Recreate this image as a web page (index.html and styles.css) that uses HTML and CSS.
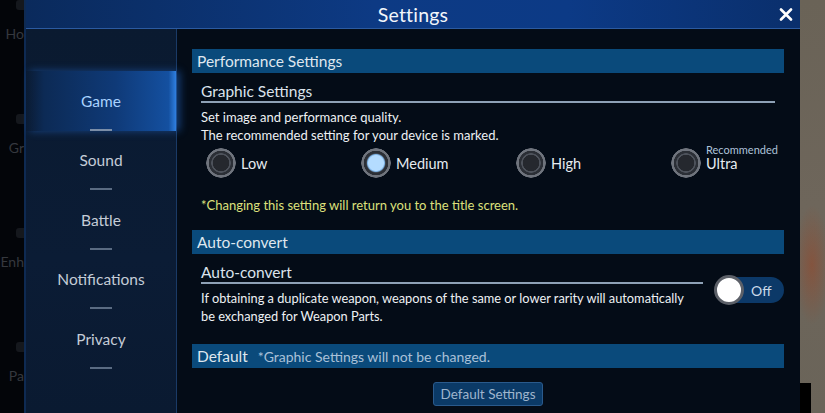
FILE: index.html
```html
<!DOCTYPE html>
<html lang="en">
<head>
    <meta charset="UTF-8">
    <meta name="viewport" content="width=device-width, initial-scale=1.0">
    <title>Settings</title>
    <link rel="stylesheet" href="styles.css">
</head>
<body>
    <div class="screen">
        <div class="bgLeft">
            <div class="bgItem"><span class="bgIcon"></span><span class="bgText">Ho</span></div>
            <div class="bgItem"><span class="bgIcon"></span><span class="bgText">Gr</span></div>
            <div class="bgItem"><span class="bgIcon"></span><span class="bgText">Enh</span></div>
            <div class="bgItem"><span class="bgIcon"></span><span class="bgText">Pa</span></div>
        </div>

        <div class="dialog">
            <div class="dlgHead">
                <span></span>
                <h1 class="dlgTitle">Settings</h1>
                <button class="close" aria-label="Close">
                    <svg width="14" height="13" viewBox="0 0 14 13">
                        <path d="M2 1.5 L12 11.5 M12 1.5 L2 11.5" stroke="#fff" stroke-width="2.6" stroke-linecap="round"/>
                    </svg>
                </button>
            </div>

            <div class="dlgBody">
                <nav class="side">
                    <div class="sideItem active">Game</div>
                    <div class="sideItem">Sound</div>
                    <div class="sideItem">Battle</div>
                    <div class="sideItem">Notifications</div>
                    <div class="sideItem">Privacy</div>
                </nav>

                <div class="content">
                    <div class="bar">Performance Settings</div>
                    <div class="group">
                        <div class="subTitle">Graphic Settings</div>
                        <p class="desc">Set image and performance quality.<br>The recommended setting for your device is marked.</p>
                        <div class="radios">
                            <div class="radio"><span class="dot"></span><span class="radioLabel">Low</span></div>
                            <div class="radio"><span class="dot on"></span><span class="radioLabel">Medium</span></div>
                            <div class="radio"><span class="dot"></span><span class="radioLabel">High</span></div>
                            <div class="radio"><span class="dot"></span><span class="radioLabel stack"><small>Recommended</small><span>Ultra</span></span></div>
                        </div>
                        <p class="note">*Changing this setting will return you to the title screen.</p>
                    </div>

                    <div class="bar">Auto-convert</div>
                    <div class="group row">
                        <div class="rowText">
                            <div class="subTitle">Auto-convert</div>
                            <p class="desc small">If obtaining a duplicate weapon, weapons of the same or lower rarity will automatically be exchanged for Weapon Parts.</p>
                        </div>
                        <div class="toggle"><span class="knob"></span><span class="toggleText">Off</span></div>
                    </div>

                    <div class="bar">Default <span class="barNote">*Graphic Settings will not be changed.</span></div>
                    <div class="btnRow">
                        <button class="btn">Default Settings</button>
                    </div>
                </div>
            </div>
        </div>

        <div class="bgRight">
            <div class="bgBlock"></div>
        </div>
    </div>
</body>
</html>
```

FILE: styles.css
```css
*{
    box-sizing: border-box;
}
body{
    margin: 0;
    background: #030509;
    font-family: Lato, "Open Sans", sans-serif;
    color: #e6eaef;
}
.screen{
    width: 825px;
    height: 413px;
    display: flex;
    overflow: hidden;
}

/* game behind the dialog */
.bgLeft{
    width: 24px;
    flex-shrink: 0;
    overflow: hidden;
    background: #030509;
    display: flex;
    flex-direction: column;
}
.bgItem{
    height: 114px;
    flex-shrink: 0;
    display: flex;
    flex-direction: column;
    align-items: flex-end;
}
.bgIcon{
    width: 8px;
    height: 10px;
    margin-bottom: 15px;
    background: #15181d;
    border-radius: 3px 0 0 3px;
}
.bgText{
    font-size: 14px;
    line-height: 18px;
    color: #35383e;
    white-space: nowrap;
}
.bgRight{
    width: 25px;
    flex-shrink: 0;
    background:
        radial-gradient(ellipse 18px 60px at 12px 265px, rgba(150,70,40,0.55), transparent),
        linear-gradient(180deg, #6a6357, #6e665b 50%, #6a6459);
    display: flex;
    flex-direction: column;
    justify-content: flex-end;
}
.bgBlock{
    width: 11px;
    height: 30px;
    background: #000;
}

/* dialog */
.dialog{
    width: 776px;
    flex-shrink: 0;
    display: flex;
    flex-direction: column;
    border-left: 2px solid #0e2a52;
}
.dlgHead{
    height: 29px;
    display: grid;
    grid-template-columns: 1fr auto 1fr;
    align-items: center;
    background: linear-gradient(90deg, #0a2a5c, #0d3a84 45%, #0c3a86 70%, #0a2f6c);
    border-bottom: 1px solid #2b5aa0;
}
.dlgTitle{
    margin: 0;
    font-size: 19.5px;
    font-weight: 400;
    color: #f2f6fb;
    letter-spacing: 0.2px;
}
.close{
    justify-self: end;
    margin-right: 7px;
    background: none;
    border: none;
    padding: 0;
    display: flex;
    cursor: pointer;
}
.dlgBody{
    flex: 1;
    display: flex;
    min-height: 0;
}

/* left menu */
.side{
    width: 151px;
    flex-shrink: 0;
    background: linear-gradient(180deg, #0a1a30, #0b1c35 60%, #0a1a31);
    border-right: 1px solid #1a3a66;
    padding-top: 42px;
    display: flex;
    flex-direction: column;
}
.sideItem{
    height: 59.5px;
    display: flex;
    align-items: center;
    justify-content: center;
    font-size: 15.5px;
    color: #c4ccd7;
    position: relative;
}
.sideItem::after{
    content: "";
    position: absolute;
    bottom: 0;
    left: 64px;
    width: 22px;
    height: 2px;
    background: #5a6b82;
}
.sideItem.active{
    color: #a9d2ff;
    background: linear-gradient(90deg, rgba(11,37,73,0) 0, #0c2a55 12%, #0f3a78 60%, #1450a0 95%, #2f7fe0);
    box-shadow: 4px 0 8px rgba(40,120,230,0.45);
}
.sideItem.active::after{
    background: #7b8ea8;
}

/* right content */
.content{
    flex: 1;
    min-width: 0;
    background: #040c17;
    padding: 20px 16px 0 15px;
    display: flex;
    flex-direction: column;
}
.bar{
    height: 24px;
    line-height: 24px;
    padding-left: 5px;
    background: #0a4a7b;
    font-size: 15.5px;
    color: #dfe7ef;
}
.barNote{
    margin-left: 6px;
    font-size: 14px;
    color: #a9c0d8;
}
.group{
    padding: 0 9px;
}
.subTitle{
    margin-top: 8px;
    height: 22px;
    line-height: 20px;
    font-size: 15.5px;
    color: #dbe3ec;
    border-bottom: 2px solid #8ea1b6;
}
.desc{
    margin: 5px 0 0;
    font-size: 13px;
    line-height: 18px;
    color: #eef1f4;
}
.desc.small{
    font-size: 12.8px;
    max-width: 490px;
}
.radios{
    margin-top: 4px;
    display: grid;
    grid-template-columns: 155px 155px 155px 1fr;
    height: 30px;
}
.radio{
    display: flex;
    align-items: center;
    padding-left: 5px;
}
.dot{
    width: 30px;
    height: 30px;
    border-radius: 50%;
    flex-shrink: 0;
    background: radial-gradient(circle, #25282e 0 8px, #4d525b 8.5px 9.5px, #2b2f36 10px 12px, #6f747d 12.5px 14.5px, transparent 15px);
}
.dot.on{
    background: radial-gradient(circle, #b4dcff 0 7.5px, #7fb4e6 8.5px, #3f4650 9.5px, #2b2f36 10px 12px, #6f747d 12.5px 14.5px, transparent 15px);
}
.radioLabel{
    margin-left: 5px;
    font-size: 14.5px;
    color: #e6ebf0;
}
.radioLabel.stack{
    display: flex;
    flex-direction: column;
    margin-top: -10px;
    line-height: 16px;
}
.radioLabel small{
    font-size: 11px;
    line-height: 12px;
    color: #aec3da;
    white-space: nowrap;
}
.note{
    margin: 18px 0 16px;
    font-size: 13px;
    line-height: 18px;
    color: #dde07c;
}
.group.row{
    display: flex;
    align-items: flex-start;
    gap: 13px;
    padding-right: 0;
    margin-bottom: 19px;
}
.rowText{
    flex: 1;
    min-width: 0;
}
.toggle{
    margin-top: 23px;
    width: 68px;
    flex-shrink: 0;
    height: 26px;
    border-radius: 13px;
    background: #0c3968;
    display: flex;
    align-items: center;
}
.knob{
    width: 30px;
    height: 30px;
    margin-left: -2px;
    border-radius: 50%;
    background: #fff;
    border: 3px solid #5c6068;
}
.toggleText{
    margin-left: 7px;
    font-size: 14px;
    color: #cbd9e8;
}
.btnRow{
    margin-top: 14px;
    display: flex;
    justify-content: center;
}
.btn{
    height: 24px;
    padding: 0 7px;
    background: #0b3a67;
    border: 1px solid #2a5a8c;
    border-radius: 3px;
    font-family: Lato, "Open Sans", sans-serif;
    font-size: 13.5px;
    color: #9fb5cd;
}
```
